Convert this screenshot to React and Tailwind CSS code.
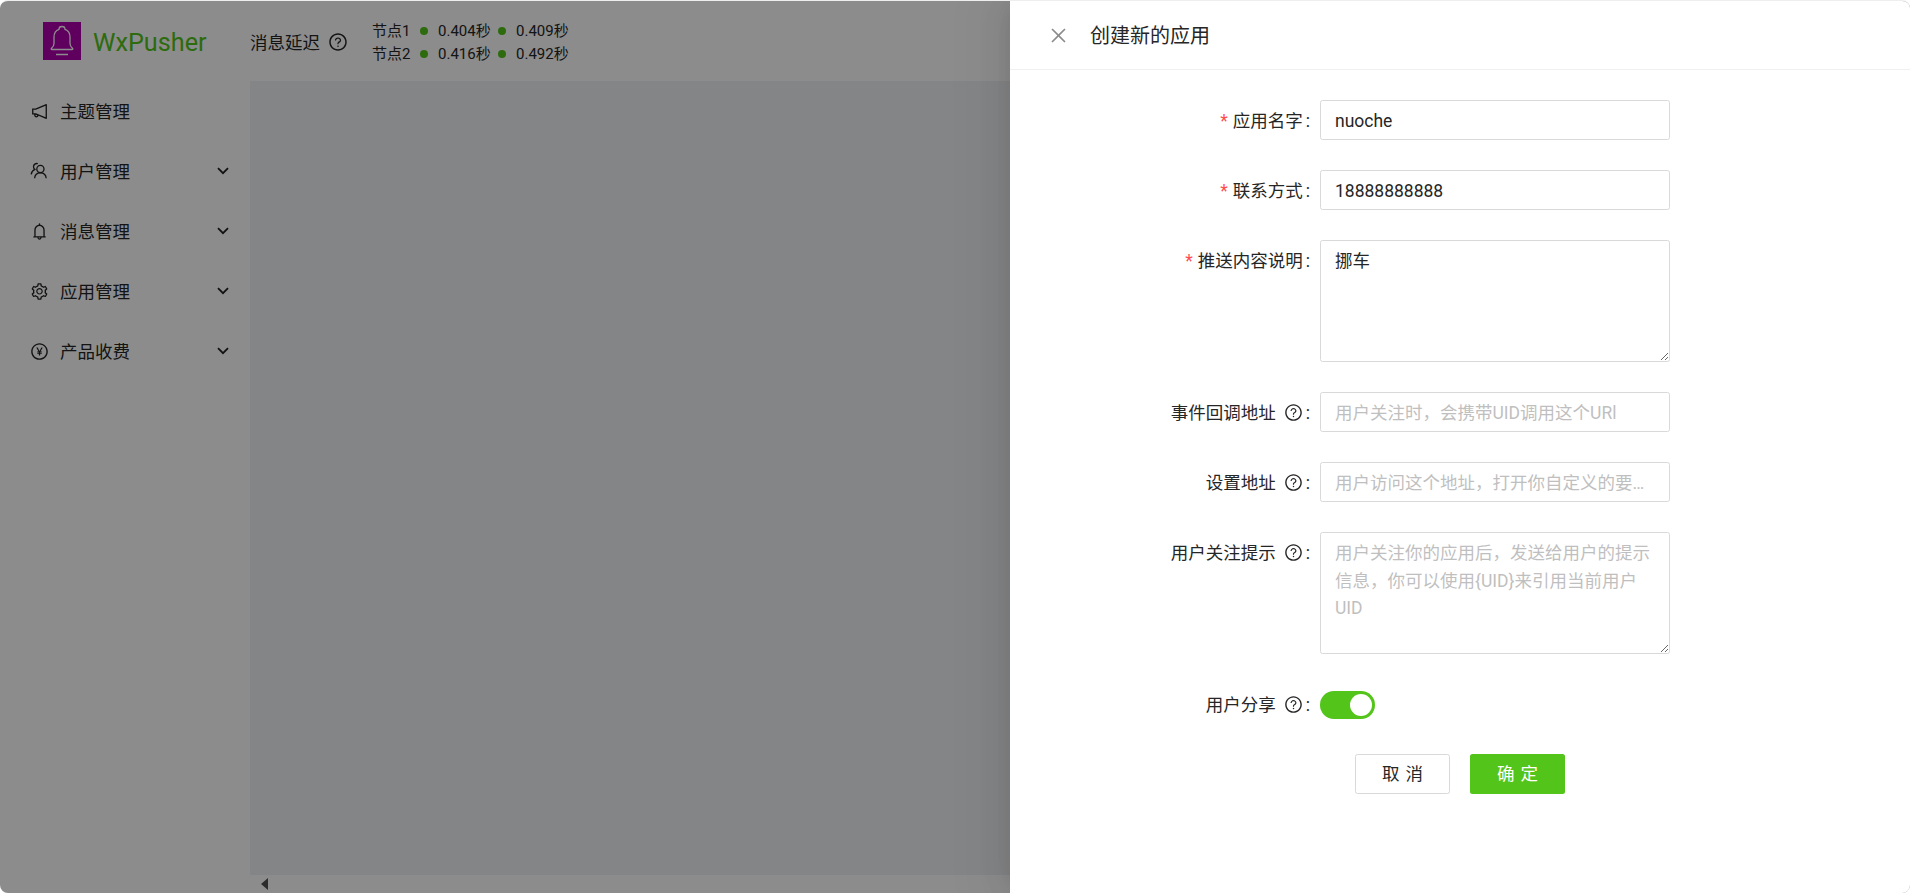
import React from "react";
import {
  AiOutlineNotification,
  AiOutlineBell,
  AiOutlineSetting,
  AiOutlinePayCircle,
  AiOutlineQuestionCircle,
  AiOutlineClose,
} from "react-icons/ai";

const FONT = "font-['Roboto','Noto_Sans_CJK_SC',sans-serif]";

function UsersIcon({ className }) {
  return (
    <svg viewBox="0 0 18 18" fill="none" stroke="currentColor" strokeWidth="1.3" className={className}>
      <circle cx="10.4" cy="7" r="3.6" />
      <path d="M4.6 16.2c.3-3.2 2.6-5.4 5.8-5.4s5.500 2.200 5.800 5.400" />
      <path d="M7.800 1.700c-2.200-.7-4.300.8-4.300 3 0 1.100.5 2 1.300 2.600C2.800 8.300 1.500 10 1.200 12.300" />
    </svg>
  );
}

function Chevron() {
  return (
    <svg viewBox="0 0 12 8" fill="none" stroke="currentColor" strokeWidth="1.8" className="mb-px h-2 w-3 text-[#222]">
      <path d="M1 1.200l5 5 5-5" />
    </svg>
  );
}

function LogoBell() {
  return (
    <svg viewBox="0 0 38 38" fill="none" stroke="#fff" strokeWidth="1.3" className="h-[38px] w-[38px]">
      <path d="M19 4.500c-1.800 0-3 1.100-3 2.800C12.500 8.600 11 11.600 11 15v6.500c0 1.800-1 3.600-2.500 4.800-.6.500-.3 1.200.4 1.200h20.200c.7 0 1-.7.4-1.200-1.500-1.200-2.500-3-2.500-4.800V15c0-3.400-1.500-6.400-5-7.700 0-1.700-1.200-2.800-3-2.800z" />
      <path d="M13 32.500h12" />
    </svg>
  );
}

const menu = [
  { label: "主题管理", icon: <AiOutlineNotification className="text-[19px]" /> },
  { label: "用户管理", icon: <UsersIcon className="h-[18px] w-[18px]" />, arrow: true },
  { label: "消息管理", icon: <AiOutlineBell className="text-[19px]" />, arrow: true },
  { label: "应用管理", icon: <AiOutlineSetting className="text-[19px]" />, arrow: true },
  { label: "产品收费", icon: <AiOutlinePayCircle className="text-[19px]" />, arrow: true },
];

const nodes = [
  ["节点1", "0.404秒", "0.409秒"],
  ["节点2", "0.416秒", "0.492秒"],
];

function Dot() {
  return <span className="h-2 w-2 rounded-full bg-[#52c41a]" />;
}

function Label({ text, required, help }) {
  return (
    <div className="flex h-10 w-[300px] shrink-0 items-center justify-end pr-[10px] text-[17.5px] text-[#262626]">
      {required && <span className="mr-[5px] pt-[2px] text-[#ff4d4f]">*</span>}
      <span className="pt-[2px]">{text}</span>
      {help && <AiOutlineQuestionCircle className="ml-[8px] text-[19px]" />}
      <span className="ml-[3px] pt-[2px]">:</span>
    </div>
  );
}

const fieldClass =
  "w-[350px] rounded-[2.5px] border border-[#d9d9d9] bg-white px-[14px] text-[17.5px] text-[#262626] placeholder:text-[#bfbfbf] outline-none";

function Drawer() {
  return (
    <aside className="absolute inset-y-0 right-0 flex w-[900px] flex-col bg-white shadow-[-6px_0_16px_-8px_rgba(0,0,0,0.08),-9px_0_28px_0_rgba(0,0,0,0.05),-12px_0_48px_16px_rgba(0,0,0,0.03)]">
      <div className="flex h-[69px] items-center border-b border-[#f0f0f0] pl-[38px]">
        <AiOutlineClose className="text-[21px] text-[#8c8c8c]" />
        <h2 className="ml-[21px] pt-[2px] text-[20px] text-[#262626]">创建新的应用</h2>
      </div>
      <form className="flex flex-col gap-[30px] pl-[10px] pt-[30px]">
        <div className="flex">
          <Label text="应用名字" required />
          <input readOnly value="nuoche" className={`${fieldClass} h-10 pt-[2px]`} />
        </div>
        <div className="flex">
          <Label text="联系方式" required />
          <input readOnly value="18888888888" className={`${fieldClass} h-10 pt-[2px]`} />
        </div>
        <div className="flex">
          <Label text="推送内容说明" required />
          <textarea readOnly value="挪车" className={`${fieldClass} h-[122px] pt-[7px] leading-[27.5px]`} />
        </div>
        <div className="flex">
          <Label text="事件回调地址" help />
          <input readOnly placeholder="用户关注时，会携带UID调用这个URl" className={`${fieldClass} h-10 truncate pt-[2px]`} />
        </div>
        <div className="flex">
          <Label text="设置地址" help />
          <input readOnly placeholder="用户访问这个地址，打开你自定义的要设置的页面地址" className={`${fieldClass} h-10 truncate pt-[2px]`} />
        </div>
        <div className="flex">
          <Label text="用户关注提示" help />
          <textarea
            readOnly
            placeholder="用户关注你的应用后，发送给用户的提示信息，你可以使用{UID}来引用当前用户UID"
            className={`${fieldClass} h-[122px] pt-[7px] leading-[27.5px]`}
          />
        </div>
        <div className="flex h-10 items-center pt-[1px]">
          <Label text="用户分享" help />
          <span className="flex h-[28px] w-[55px] items-center justify-end rounded-full bg-[#52c41a] pr-[3px]">
            <span className="h-[22px] w-[22px] rounded-full bg-white" />
          </span>
        </div>
        <div className="flex justify-center gap-5 pr-[10px]">
          <button type="button" className="h-10 w-[95px] rounded-[2.5px] border border-[#d9d9d9] bg-white pl-[6px] text-[17.5px] tracking-[0.34em] text-[#262626]">
            取消
          </button>
          <button type="button" className="h-10 w-[95px] rounded-[2.5px] bg-[#52c41a] pl-[6px] text-[17.5px] tracking-[0.34em] text-white">
            确定
          </button>
        </div>
      </form>
    </aside>
  );
}

export default function App() {
  return (
    <div className={`h-screen bg-white ${FONT}`}>
      <div className="relative flex h-full flex-col overflow-hidden rounded-lg border-t border-[#eeeeee] bg-white">
        <header className="flex h-20 shrink-0 items-center pl-[43px]">
          <div className="bg-[#ad00ae]">
            <LogoBell />
          </div>
          <div className="ml-3 w-[157px] pt-[3px] text-[25.25px] text-[#52c41a]">WxPusher</div>
          <div className="flex items-center pt-[2px] text-[17.5px] text-[#262626]">
            <span className="pt-[2px]">消息延迟</span>
            <AiOutlineQuestionCircle className="ml-[8px] text-[20px]" />
          </div>
          <div className="ml-[24px] grid grid-cols-[46px_12px_66px_12px_auto] items-center whitespace-nowrap pt-[3px] text-[15px] leading-[23px] text-[#262626]">
            {nodes.map(([name, a, b]) => (
              <React.Fragment key={name}>
                <span>{name}</span>
                <span className="flex justify-center">
                  <Dot />
                </span>
                <span className="pl-2">{a}</span>
                <span className="flex justify-center">
                  <Dot />
                </span>
                <span className="pl-2">{b}</span>
              </React.Fragment>
            ))}
          </div>
        </header>
        <div className="flex min-h-0 flex-1">
          <nav className="w-[250px] shrink-0">
            {menu.map((item) => (
              <div key={item.label} className="flex h-[60px] items-center pl-[30px] pr-[21px] text-[17.5px] text-[#262626]">
                <span className="flex w-[30px] items-center text-[#222]">{item.icon}</span>
                <span className="flex-1 pt-[2px]">{item.label}</span>
                {item.arrow && <Chevron />}
              </div>
            ))}
          </nav>
          <main className="flex min-w-0 flex-1 flex-col">
            <div className="flex-1 bg-[#f0f2f5]" />
            <div className="flex h-[18px] items-center pl-[11px]">
              <svg viewBox="0 0 7 12" className="h-3 w-[7px] fill-[#505050]">
                <path d="M7 0v12L0 6z" />
              </svg>
            </div>
          </main>
        </div>
        <div className="absolute inset-0 bg-black/45" />
        <Drawer />
      </div>
    </div>
  );
}
